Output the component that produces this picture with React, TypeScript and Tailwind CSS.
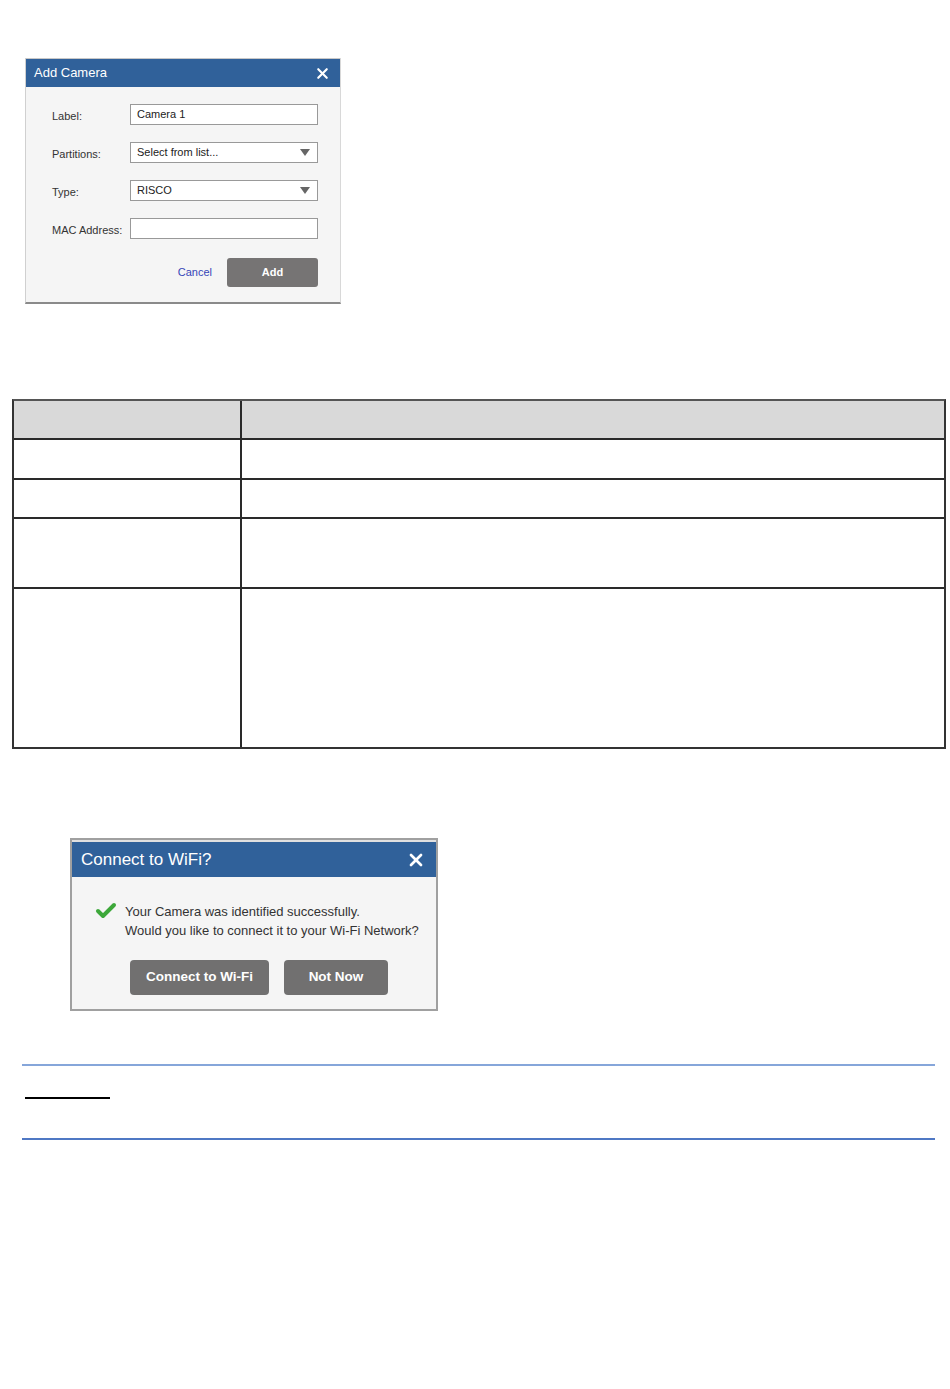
import { X, Check } from "lucide-react";

const FONT = "font-['Liberation_Sans',Arial,sans-serif]";

function Field({ label, value, select }: { label: string; value?: string; select?: boolean }) {
  return (
    <div className="flex h-[21px] items-center">
      <span className="mt-[3px] w-[78px] text-[11px] text-[#333]">{label}</span>
      <div className="flex h-[21px] w-[188px] items-center justify-between border border-[#999] bg-white pl-[6px] pr-[7px] text-[11px] text-[#222]">
        <span>{value}</span>
        {select ? (
          <svg width="10" height="7" viewBox="0 0 10 7">
            <path d="M0 0h10L5 7z" fill="#666" />
          </svg>
        ) : null}
      </div>
    </div>
  );
}

function AddCamera() {
  return (
    <div className="ml-[25px] w-[316px] border-l border-r border-b-2 border-l-[#d0d0d0] border-r-[#d8d8d8] border-b-[#8a8a8a] bg-[#f5f5f5]">
      <div className="flex h-[29px] items-center justify-between border-t border-[#c8c8c8] bg-[#30619a] pl-[8px] pr-[9px]">
        <span className="text-[13px] text-white">Add Camera</span>
        <X size={17} strokeWidth={3} className="text-white" />
      </div>
      <div className="flex flex-col gap-[17px] pl-[26px] pt-[17px]">
        <Field label="Label:" value="Camera 1" />
        <Field label="Partitions:" value="Select from list..." select />
        <Field label="Type:" value="RISCO" select />
        <Field label="MAC Address:" value="" />
      </div>
      <div className="flex items-center justify-end gap-[15px] pb-[15px] pr-[22px] pt-[19px]">
        <span className="text-[11px] text-[#3645b8]">Cancel</span>
        <div className="flex h-[29px] w-[91px] items-center justify-center rounded-[3px] bg-[#767474] text-[11px] font-bold text-white">
          Add
        </div>
      </div>
    </div>
  );
}

const ROWS = [37, 40, 39, 70, 160];

function Table() {
  return (
    <div className="mx-[12px] mt-[95px] w-[934px] border-2 border-[#333] border-t-[#555]">
      {ROWS.map((h, i) => (
        <div
          key={i}
          className={`grid grid-cols-[228px_1fr] ${i === 0 ? "bg-[#d9d9d9]" : "border-t-2 border-[#2a2a2a] bg-white"}`}
          style={{ height: h }}
        >
          <div className="border-r-2 border-[#2a2a2a]" />
          <div />
        </div>
      ))}
    </div>
  );
}

function ConnectWifi() {
  return (
    <div className="ml-[70px] mt-[89px] w-[368px] border-2 border-[#a0a0a0] bg-[#f5f5f5]">
      <div className="flex h-[37px] items-center justify-between border-t-2 border-[#e0e0e0] bg-[#30619a] pl-[9px] pr-[10px]">
        <span className="text-[17px] text-white">Connect to WiFi?</span>
        <X size={20} strokeWidth={3.2} className="text-white" />
      </div>
      <div className="flex gap-[7px] pl-[22px] pt-[25px]">
        <Check size={24} strokeWidth={4} className="mt-[-3px] text-[#3da83a]" />
        <div className="text-[13px] leading-[19px] text-[#333]">
          <div>Your Camera was identified successfully.</div>
          <div>Would you like to connect it to your Wi-Fi Network?</div>
        </div>
      </div>
      <div className="flex gap-[15px] pb-[14px] pl-[58px] pt-[20px]">
        <div className="flex h-[35px] w-[139px] items-center justify-center rounded-[4px] bg-[#717070] text-[13.5px] font-bold text-white">
          Connect to Wi-Fi
        </div>
        <div className="flex h-[35px] w-[104px] items-center justify-center rounded-[4px] bg-[#717070] text-[13.5px] font-bold text-white">
          Not Now
        </div>
      </div>
    </div>
  );
}

export default function App() {
  return (
    <div className={`${FONT} min-h-[1389px] w-[950px] bg-white pt-[58px]`}>
      <AddCamera />
      <Table />
      <ConnectWifi />
      <div className="ml-[22px] mr-[15px] mt-[53px] h-[2px] bg-[#86a6da]" />
      <div className="ml-[25px] mt-[31px] h-[2px] w-[85px] bg-black" />
      <div className="ml-[22px] mr-[15px] mt-[39px] h-[2px] bg-[#4f78c4]" />
    </div>
  );
}
